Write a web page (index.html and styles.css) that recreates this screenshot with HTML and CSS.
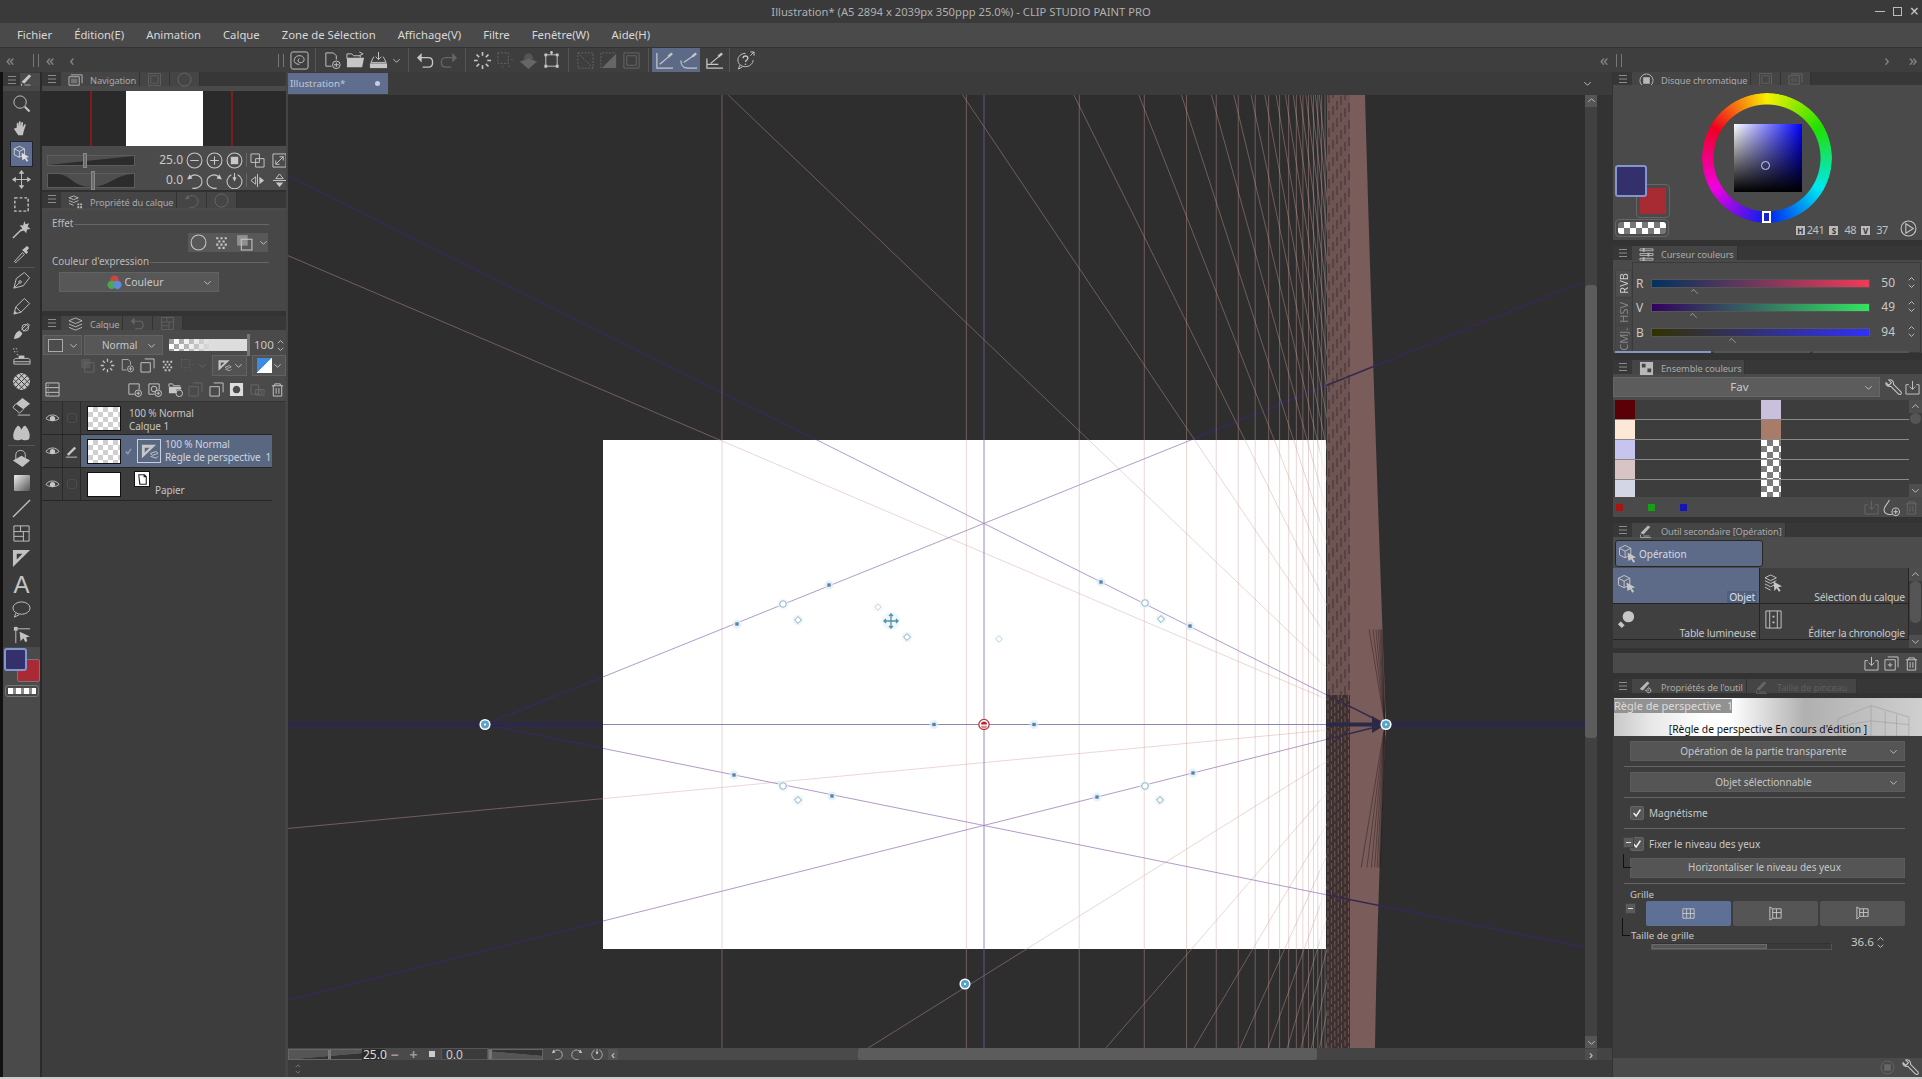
FILE: index.html
```html
<!DOCTYPE html>
<html lang="fr">
<head>
<meta charset="utf-8">
<title>CLIP STUDIO PAINT PRO</title>
<link rel="stylesheet" href="styles.css">
</head>
<body>
<svg class="defs" aria-hidden="true">
<defs>
<symbol id="burger" viewBox="0 0 12 12"><path d="M2 2.500h8M2 6h8M2 9.500h8"/></symbol>
<symbol id="chev" viewBox="0 0 10 10"><path d="M1.500 3.500 5 7l3.500-3.500"/></symbol>
<symbol id="spin" viewBox="0 0 10 16"><path d="M2 5.500 5 2.500l3 3M2 10.500l3 3 3-3"/></symbol>
<symbol id="zoom" viewBox="0 0 20 20"><circle cx="8.500" cy="8.500" r="6.500"/><path d="m13.500 13.500 5 5" stroke-width="2.200"/></symbol>
<symbol id="hand" viewBox="0 0 20 20"><path class="fl" d="M5 9V5c0-1.300 1.700-1.300 1.800 0l.4 3V3.500c0-1.400 1.900-1.400 2 0V8l.6-4c.2-1.300 1.900-1 1.800.2L11.300 9l1.500-3c.6-1 2-.4 1.600.7l-2 6-1 4.300H6.500L2.500 11c-.8-1.100.6-2.200 1.500-1.200Z"/></symbol>
<symbol id="objsel" viewBox="0 0 20 20"><path d="m7.500 1.500 6 3v7l-6 3-6-3v-7Zm-6 3 6 3 6-3m-6 3v7"/><path class="fl" d="m10 9 9 5-3.500 1 2.500 3.500-1.800 1.200-2.300-3.600L11 18Z"/></symbol>
<symbol id="move" viewBox="0 0 20 20"><path d="M10 3v14M3 10h14"/><path class="fl" d="m10 0 3 4H7Zm0 20-3-4h6ZM0 10l4-3v6Zm20 0-4 3V7Z"/></symbol>
<symbol id="marquee" viewBox="0 0 20 20"><path stroke-dasharray="3 2" d="M3 3h14v14H3Z" stroke-width="1.500"/></symbol>
<symbol id="wand" viewBox="0 0 20 20"><path d="m1 19 9-9" stroke-width="1.500"/><path class="fl" d="m13 1 1.300 3.500L18 3.500l-1.500 3.500 3 2.500-3.800.6-.7 3.900-2.500-3-3.500 1 1.700-3.400L8 5.500l3.700.3Z"/></symbol>
<symbol id="dropper" viewBox="0 0 20 20"><path d="M2.500 17.500 11 8l2 2-9 8.500Z"/><path class="fl" d="m11 5 2-1.500L15 1.500c1.200-1 3.500 1.300 2.500 2.500l-2 2L17 7.500 15 9.500 10 4.500Z"/></symbol>
<symbol id="pen" viewBox="0 0 20 20"><path d="M2 18 4.500 8 13 1.500 18.500 7 12 15.500Zm0 0 5.500-5.500"/><circle cx="8.500" cy="11.500" r="1.300"/></symbol>
<symbol id="pencil" viewBox="0 0 20 20"><path d="M2 18 4 10.500 13 1.500l5.500 5.500-9 9Zm2-7.500 5.500 5.500"/><path class="fl" d="M2 18 3 14.500 5.500 17Z"/></symbol>
<symbol id="brush" viewBox="0 0 20 20"><path class="fl" d="M2 18c1-5 2-7 6-9l3 3c-2 4-4 5-9 6Z"/><path d="m10 8 4-4 2.500-2.500 2 2-2.500 2.500-4 4"/><circle cx="14" cy="6" r="3.500"/></symbol>
<symbol id="spray" viewBox="0 0 20 20"><path class="fl" d="M7 9h6v3H7Z"/><path d="M4 12h13c1 0 2 1 2 2v4H2v-4c0-1 1-2 2-2Zm-2 3.500h17"/><path stroke-dasharray="1.500 1.500" d="M1 2h6M2 5h4M5 8h3"/></symbol>
<symbol id="decor" viewBox="0 0 20 20"><circle class="fl" cx="10" cy="10" r="9"/><path class="sd" d="M1 7 7 1M1 13 13 1M3 17 17 3M7 19 19 7M13 19l6-6M1 13l6 6M1 7l12 12M3 3l14 14M7 1l12 12M13 1l6 6"/></symbol>
<symbol id="eraser" viewBox="0 0 20 20"><path class="fl" d="m11 1 8 6-7 6-8-6Z"/><path d="m4 7-3 4 7 6 4-4M6 19h13"/></symbol>
<symbol id="blend" viewBox="0 0 20 20"><path class="fl" d="M2 17c-2-5 1-11 4-14 2 0 3 2 4 4 1-2 2-4 4-4 3 3 6 9 4 14-3 2-6 1-8 0-2 1-5 2-8 0Z"/></symbol>
<symbol id="fill" viewBox="0 0 20 20"><path class="fl" d="M10 7 19 12 11 19 1 12Z"/><path d="M4 11V6c0-6 10-6 10 0v3"/></symbol>
<symbol id="line" viewBox="0 0 20 20"><path d="M1 19 19 1" stroke-width="1.400"/></symbol>
<symbol id="frame" viewBox="0 0 20 20"><path d="M2 2h16v16H2ZM2 8h16M9 2v6M12 8v10M2 13h10"/></symbol>
<symbol id="ruler" viewBox="0 0 20 20"><path class="fl" d="M1 1h18L1 19Zm4 4v6l6-6Z" fill-rule="evenodd"/></symbol>
<symbol id="balloon" viewBox="0 0 20 20"><ellipse cx="10" cy="8.500" rx="9" ry="6.500"/><path d="m4 14-1.500 4 5-2.500"/></symbol>
<symbol id="correct" viewBox="0 0 20 20"><path class="fl" d="M2 2h4v4H2Z"/><path d="M6 4h13M4 6v13"/><path class="fl" d="m8 7 11 5-4 1 1 4-2 1-2-4-3 3Z"/></symbol>
<symbol id="spiral" viewBox="0 0 20 20"><rect x="1" y="1" width="18" height="18" rx="2"/><path d="M10 14c-4 0-6-2-5.500-5C5 6 8 4.500 11 5c3 .5 4.500 3 3.500 5.500-1 2-4 2.500-5.500 1-1-1-.6-3 1-3.500"/></symbol>
<symbol id="newdoc" viewBox="0 0 20 20"><path d="M9 16H3V2h8l3 3v4"/><circle cx="14" cy="14.500" r="4"/><path d="M14 12v5M11.500 14.500h5"/></symbol>
<symbol id="folder" viewBox="0 0 20 20"><path class="fl" d="M1 17V7h18l-2 10Z"/><path d="M1 8V3h5l2 2h7v2M14 1l4 2-4 2"/></symbol>
<symbol id="save" viewBox="0 0 20 20"><path d="M10 1v8M7 6l3 3 3-3M5 6 2 12h16l-3-6"/><path class="fl" d="M1 13h18v5H1Z"/></symbol>
<symbol id="undo" viewBox="0 0 20 20"><path d="M5 7h8c6 0 6 10 0 10H7" stroke-width="1.400"/><path class="fl" d="M6 2v10L1 7Z"/></symbol>
<symbol id="redo" viewBox="0 0 20 20"><path d="M15 7H7c-6 0-6 10 0 10h6" stroke-width="1.400"/><path class="fl" d="M14 2v10l5-5Z"/></symbol>
<symbol id="load" viewBox="0 0 20 20"><path stroke-width="1.700" d="M10 1v4M10 15v4M1 10h4M15 10h4M3.700 3.700l2.800 2.800M13.500 13.500l2.800 2.800M16.300 3.700l-2.800 2.800M6.500 13.500l-2.800 2.800"/></symbol>
<symbol id="selghost" viewBox="0 0 20 20"><path stroke-dasharray="2 1.500" d="M2 2h11v11H2Z"/><path stroke-dasharray="1.500 2" d="M16 9h3M7 16v3M13 16h3"/></symbol>
<symbol id="filldia" viewBox="0 0 20 20"><path class="fl" d="M10 8 19 11 10 19 1 11Z"/><path class="fl" d="M5 9c0-9 10-9 10 0Z" opacity=".6"/></symbol>
<symbol id="xform" viewBox="0 0 20 20"><path d="M4 4h12v12H4ZM10 4V0"/><path class="fl" d="M2.500 2.500h3v3h-3Zm12 0h3v3h-3Zm-12 12h3v3h-3Zm12 0h3v3h-3Zm-6-14h3v2h-3Z"/></symbol>
<symbol id="g1" viewBox="0 0 20 20"><path stroke-dasharray="2 1.500" d="M2 2h16v16H2ZM2 2l16 16"/></symbol>
<symbol id="g2" viewBox="0 0 20 20"><path stroke-dasharray="2 1.500" d="M2 18V2h16"/><path class="fl" d="M18 3v15H3Z"/></symbol>
<symbol id="g3" viewBox="0 0 20 20"><path d="M2 2h16v16H2ZM5 5h10v10H5Z"/></symbol>
<symbol id="r1" viewBox="0 0 20 20"><path d="M2 2v16h17M5 14 18 3" stroke-width="1.300"/><path d="m14 6 4-3.500" stroke-width="2.400"/></symbol>
<symbol id="r2" viewBox="0 0 20 20"><path d="M2 10c0 5 3 8 7 8h10M5 12 18 3" stroke-width="1.300"/><path d="m14 6 4-3.500" stroke-width="2.400"/></symbol>
<symbol id="r3" viewBox="0 0 20 20"><path d="M2 8v10h17M2 14h12M6 13 18 3" stroke-width="1.300"/><path d="m14 6 4-3.500" stroke-width="2.400"/></symbol>
<symbol id="help" viewBox="0 0 20 20"><path d="M10 2.500c-4.500 0-8 3-8 7s3.500 7 8 7c4 0 8-3 8-7M4 15l-1.500 4L7 16.500M15 1h4v4M19 1l-4 4"/><path d="M7.500 7.500c0-3 5-3 5 0 0 2-2.500 2-2.500 4" stroke-width="1.400"/><circle class="fl" cx="10" cy="14" r=".8"/></symbol>
<symbol id="cminus" viewBox="0 0 16 16"><circle cx="8" cy="8" r="7"/><path d="M4 8h8"/></symbol>
<symbol id="cplus" viewBox="0 0 16 16"><circle cx="8" cy="8" r="7"/><path d="M4 8h8M8 4v8"/></symbol>
<symbol id="cstop" viewBox="0 0 16 16"><circle cx="8" cy="8" r="7"/><path class="fl" d="M4.500 4.500h7v7h-7Z"/></symbol>
<symbol id="fitA" viewBox="0 0 16 16"><path d="M1 1h9v9H1ZM6 6h9v9H6Z"/></symbol>
<symbol id="fitB" viewBox="0 0 16 16"><path d="M1 1h14v14H1ZM4 12l8-8M8 4h4v4M4 8v4h4"/></symbol>
<symbol id="rotl" viewBox="0 0 16 16"><path d="M4 4.500C8 1 15 3 15 9s-7 7-9 6"/><path class="fl" d="m1 7 5-1-2.500-4Z"/></symbol>
<symbol id="rotr" viewBox="0 0 16 16"><path d="M12 4.500C8 1 1 3 1 9s7 7 9 6"/><path class="fl" d="m15 7-5-1 2.500-4Z"/></symbol>
<symbol id="rotz" viewBox="0 0 16 16"><path d="M11 2.500A7 7 0 1 1 5 2.500M8 1v7"/><path class="fl" d="M6 5h4L8 9Z"/></symbol>
<symbol id="fliph" viewBox="0 0 16 16"><path d="M8 1v14M6 4 1 8l5 4Z"/><path class="fl" d="m10 4 5 4-5 4Z"/></symbol>
<symbol id="flipv" viewBox="0 0 16 16"><path d="M1 8h14M4 6l4-5 4 5Z"/><path class="fl" d="m4 10 4 5 4-5Z"/></symbol>
<symbol id="stack" viewBox="0 0 16 16"><path d="M1 4h11v9H1Z"/><path d="M3 2h12v9"/><path class="fl" d="M3 6h7v5H3Z" opacity=".4"/></symbol>
<symbol id="layers" viewBox="0 0 16 16"><path d="m8 1 7 3-7 3-7-3ZM1 7.500l7 3 7-3M1 11l7 3 7-3"/></symbol>
<symbol id="layprop" viewBox="0 0 16 16"><path d="m6 1 5 2-5 2-5-2ZM1 6l5 2 5-2M1 9l5 2"/><path class="fl" d="M10 9h2v2h-2Zm3 0h2v2h-2Zm-3 3h2v2h-2Zm3 0h2v2h-2Z"/></symbol>
<symbol id="circ" viewBox="0 0 16 16"><circle cx="8" cy="8" r="7"/></symbol>
<symbol id="dots" viewBox="0 0 16 16"><path class="fl" d="M3 3h2v2H3Zm4 0h2v2H7Zm4 0h2v2h-2ZM5 6h2v2H5Zm4 0h2v2H9ZM3 9h2v2H3Zm4 0h2v2H7Zm4 0h2v2h-2ZM5 12h2v2H5Zm4 0h2v2H9Z"/></symbol>
<symbol id="wedges" viewBox="0 0 16 16"><path class="fl" d="M1 1h10v10H1Z" opacity=".5"/><path d="M5 5h10v10H5Z"/></symbol>
<symbol id="rgb" viewBox="0 0 16 16"><circle cx="8" cy="5" r="4.500" fill="#c8483c" stroke="none"/><circle cx="5" cy="10.500" r="4.500" fill="#4ca84c" stroke="none"/><circle cx="11" cy="10.500" r="4.500" fill="#5c8cd8" stroke="none"/></symbol>
<symbol id="eye" viewBox="0 0 16 16"><path d="M1 8c3-5 11-5 14 0M1 8c3 3 11 3 14 0"/><circle class="fl" cx="8" cy="8" r="2.800"/></symbol>
<symbol id="brushmark" viewBox="0 0 16 16"><path d="M2 14h12"/><path class="fl" d="m3 11 8-8 2 1.500-8 8Z"/></symbol>
<symbol id="persp" viewBox="0 0 20 20"><path class="fl" d="M2 3h15L2 17Zm3 3v5l5-5Z" fill-rule="evenodd"/><path d="m11 12 6-2 2 2-6 2ZM11 15l6 2 2-2"/></symbol>
<symbol id="page" viewBox="0 0 14 14"><path fill="#222" stroke="none" d="M3 2h6l2 2v8H4Z"/><path fill="#fff" stroke="none" d="M4 3h4v2h2v6H5Z"/></symbol>
<symbol id="addlay" viewBox="0 0 16 16"><path d="M8 13H2V2h11v6"/><circle cx="12" cy="12" r="3.500"/><path d="M12 10v4M10 12h4"/></symbol>
<symbol id="addvec" viewBox="0 0 16 16"><path d="M8 13H2V2h11v6"/><circle cx="7.500" cy="7.500" r="3"/><circle cx="12" cy="12" r="3.500"/><path d="M12 10v4M10 12h4"/></symbol>
<symbol id="addfold" viewBox="0 0 16 16"><path class="fl" d="M1 12V5h13v3H9v4Z"/><path d="M1 5V2h4l1 2h7"/><circle cx="12" cy="12" r="3.500"/></symbol>
<symbol id="dup" viewBox="0 0 16 16"><path d="M1 5h10v10H1ZM5 1h10v10"/></symbol>
<symbol id="maskc" viewBox="0 0 16 16"><path class="fl" fill-rule="evenodd" d="M1 1h14v14H1Zm7 3a4 4 0 1 0 .01 0Z"/></symbol>
<symbol id="addm" viewBox="0 0 16 16"><path d="M1 3h8v10H1Z"/><path d="M6 8h9v6H6Z"/><circle cx="10.500" cy="11" r="2"/></symbol>
<symbol id="trash" viewBox="0 0 16 16"><path d="M2 4h12M5 4V2h6v2M3.500 4v11h9V4M6.500 6.500v6M9.500 6.500v6"/></symbol>
<symbol id="listi" viewBox="0 0 16 16"><path d="M1 1h14v14H1ZM1 6h14M1 11h14M3 3.500h1M3 8.500h1M3 13h1"/></symbol>
<symbol id="wrench" viewBox="0 0 16 16"><path d="M1 3.500 3.500 6 6 3.500 3.500 1c2-.8 5 .5 4.500 4l7 7c.8 1 .2 2.500-1 2.500-.5 0-1-.2-1.500-.6l-7-7C3 7.500 .5 6 1 3.500Z"/></symbol>
<symbol id="import" viewBox="0 0 16 16"><path d="M4 5H1v10h14V5h-3M8 1v9M5 7l3 3 3-3"/></symbol>
<symbol id="adddrop" viewBox="0 0 16 16"><path d="M6 1C4 5 1 7 1 10c0 5 7 5 8 4"/><circle cx="12" cy="12" r="3.500"/><path d="M10 12h4M12 10v4"/></symbol>
<symbol id="plusbox" viewBox="0 0 16 16"><path d="M1 4h11v11H1ZM4 1h11v11M6.500 7v5M4 9.500h5"/></symbol>
<symbol id="bulb" viewBox="0 0 20 20"><circle class="fl" cx="12" cy="7" r="6"/><path class="fl" d="m4 12 4 4-3 3-4-4Z"/></symbol>
<symbol id="chrono" viewBox="0 0 20 20"><path d="M2 1h16v18H2ZM6 1v18M14 1v18"/><path class="fl" d="M9 6h2v2H9Zm0 6h2v2H9Z"/></symbol>
<symbol id="laysel" viewBox="0 0 20 20"><path d="m7 1 6 3-6 3-6-3ZM1 7l6 3 6-3M1 10.500l6 3 4-2M1 14l6 3"/><path class="fl" d="m10 8 9 5-4 1 2.500 3.500-1.800 1.200-2.300-3.700L11 18Z"/></symbol>
<symbol id="toolhdr" viewBox="0 0 20 20"><path class="fl" d="M2 12 12 2l3 2-9 10Z"/><path d="M2 14v4h14M6 16h8"/></symbol>
<symbol id="toolprop" viewBox="0 0 20 20"><path class="fl" d="M1 12 11 2l3 2-9 10Z"/><circle cx="13" cy="14" r="3"/><path stroke-dasharray="1.500 1.800" d="M13 9v10M8 14h10"/></symbol>
<symbol id="palette" viewBox="0 0 16 16"><path class="fl" d="M1 1h14v14H1Z"/><path fill="#444" stroke="none" d="M3 3h4v4H3Zm6 5h4v4H9Z"/></symbol>
<symbol id="sliders" viewBox="0 0 16 16"><path d="M1 2h14v2H1ZM1 7h14v2H1ZM1 12h14v2H1Z"/><path class="fl" d="M4 1h2v4H4Zm5 5h2v4H9Zm-5 5h2v4H4Z"/></symbol>
<symbol id="grid1" viewBox="0 0 16 16"><path d="M2 3h12v10H2ZM2 8h12M6 3v10M10 3v10"/></symbol>
<symbol id="grid2" viewBox="0 0 16 16"><path d="M2 1l3 2h9v10H5l-3 2ZM5 7h9M9 3v10M5 3v10"/></symbol>
<symbol id="grid3" viewBox="0 0 16 16"><path d="M2 1l3 2h9v8H5l-3 3ZM5 7h9M9 3v8M5 3v8"/></symbol>
<symbol id="check" viewBox="0 0 14 14"><path d="m3 7 3 3.500L11 3" stroke-width="1.800"/></symbol>
<symbol id="play" viewBox="0 0 16 16"><circle cx="8" cy="8" r="7"/><path d="M5.500 3.500 12.500 8l-7 4.500Z"/></symbol>
<symbol id="h-handle" viewBox="0 0 12 12"><circle cx="6" cy="6" r="5.500" fill="#dfeaf2" stroke="none" opacity=".7"/><rect x="4" y="4" width="4" height="4" fill="#4f86ab" stroke="none"/></symbol>
<symbol id="h-ring" viewBox="0 0 14 14"><circle cx="7" cy="7" r="6.500" fill="#e8f2f8" stroke="none" opacity=".6"/><circle cx="7" cy="7" r="3.800" fill="#fff" stroke="#7fa8bd" stroke-width="1"/></symbol>
<symbol id="h-diam" viewBox="0 0 14 14"><circle cx="7" cy="7" r="6.500" fill="#e8f2f8" stroke="none" opacity=".6"/><path d="m7 3 4 4-4 4-4-4Z" fill="#fff" stroke="#6c9db8" stroke-width="1"/></symbol>
<symbol id="h-vp" viewBox="0 0 14 14"><circle cx="7" cy="7" r="6.500" fill="#fff" stroke="none"/><circle cx="7" cy="7" r="4.700" fill="#58a2c8" stroke="none"/><circle cx="7" cy="7" r="1.300" fill="#fff" stroke="none"/></symbol>
<symbol id="h-red" viewBox="0 0 14 14"><circle cx="7" cy="7" r="6" fill="#fff" stroke="#c0353c" stroke-width="1.500"/><path d="M3.500 7a3.500 3.500 0 0 1 7 0Z" fill="#b02a32" stroke="none"/><path d="M3.500 8.500a3.500 3.500 0 0 0 7 0Z" fill="#d88a8e" stroke="none"/></symbol>
</defs>
</svg>

<header class="titlebar">
  <div class="title">Illustration* (A5 2894 x 2039px 350ppp 25.0%) - CLIP STUDIO PAINT PRO</div>
  <div class="winbtns"><span class="wb-min"></span><span class="wb-max"></span><span class="wb-close">×</span></div>
</header>

<nav class="menubar">
  <span>Fichier</span><span>Édition(E)</span><span>Animation</span><span>Calque</span><span>Zone de Sélection</span><span>Affichage(V)</span><span>Filtre</span><span>Fenêtre(W)</span><span>Aide(H)</span>
</nav>

<div class="toolbar">
  <div class="tb-left">
    <span class="dbl">«</span><span class="grip"></span><span class="dbl">«</span><span class="sgl">‹</span><span class="fillgap"></span><span class="grip end"></span>
  </div>
  <div class="tb-group tb-spiral"><svg class="ico i18"><use href="#spiral"/></svg></div>
  <div class="tb-group"><svg class="ico i18"><use href="#newdoc"/></svg><svg class="ico i18"><use href="#folder"/></svg><svg class="ico i18"><use href="#save"/></svg><svg class="ico i8"><use href="#chev"/></svg></div>
  <div class="tb-group"><svg class="ico i18"><use href="#undo"/></svg><svg class="ico i18 dim"><use href="#redo"/></svg></div>
  <div class="tb-group"><svg class="ico i18"><use href="#load"/></svg><svg class="ico i18 dim"><use href="#selghost"/></svg><svg class="ico i18 dim"><use href="#filldia"/></svg><svg class="ico i18"><use href="#xform"/></svg></div>
  <div class="tb-group"><svg class="ico i18 dim"><use href="#g1"/></svg><svg class="ico i18 dim"><use href="#g2"/></svg><svg class="ico i18 dim"><use href="#g3"/></svg></div>
  <div class="tb-group tb-rulers"><div class="tb-active"><svg class="ico i18"><use href="#r1"/></svg><svg class="ico i18"><use href="#r2"/></svg></div><svg class="ico i18"><use href="#r3"/></svg></div>
  <div class="tb-group tb-last"><svg class="ico i18"><use href="#help"/></svg></div>
  <div class="tb-right"><span class="dbl">«</span><span class="grip"></span><span class="fillgap"></span><span class="sgl">›</span><span class="dbl">»</span></div>
</div>

<div class="workspace">
  <aside class="tools">
    <div class="tools-head"><svg class="ico i12 burger"><use href="#burger"/></svg><span class="tools-tab"><svg class="ico i14"><use href="#toolhdr"/></svg></span></div>
    <div class="tool-list">
      <div class="tool"><svg class="ico"><use href="#zoom"/></svg></div>
      <div class="tool"><svg class="ico"><use href="#hand"/></svg></div>
      <div class="tool on"><svg class="ico"><use href="#objsel"/></svg></div>
      <div class="tool"><svg class="ico"><use href="#move"/></svg></div>
      <div class="tool"><svg class="ico"><use href="#marquee"/></svg></div>
      <div class="tool"><svg class="ico"><use href="#wand"/></svg></div>
      <div class="tool"><svg class="ico"><use href="#dropper"/></svg></div>
      <div class="tool-sep"></div>
      <div class="tool"><svg class="ico"><use href="#pen"/></svg></div>
      <div class="tool"><svg class="ico"><use href="#pencil"/></svg></div>
      <div class="tool"><svg class="ico"><use href="#brush"/></svg></div>
      <div class="tool"><svg class="ico"><use href="#spray"/></svg></div>
      <div class="tool"><svg class="ico"><use href="#decor"/></svg></div>
      <div class="tool"><svg class="ico"><use href="#eraser"/></svg></div>
      <div class="tool"><svg class="ico"><use href="#blend"/></svg></div>
      <div class="tool-sep"></div>
      <div class="tool"><svg class="ico"><use href="#fill"/></svg></div>
      <div class="tool"><span class="grad-ico"></span></div>
      <div class="tool"><svg class="ico"><use href="#line"/></svg></div>
      <div class="tool"><svg class="ico"><use href="#frame"/></svg></div>
      <div class="tool"><svg class="ico"><use href="#ruler"/></svg></div>
      <div class="tool tool-a">A</div>
      <div class="tool"><svg class="ico"><use href="#balloon"/></svg></div>
      <div class="tool"><svg class="ico"><use href="#correct"/></svg></div>
    </div>
    <div class="tool-colors">
      <div class="mini-swatches"><span class="mini-bg"></span><span class="mini-fg"></span></div>
      <div class="mini-trans"><span></span></div>
    </div>
  </aside>

  <section class="leftcol">
    <div class="phead"><svg class="ico i12 burger"><use href="#burger"/></svg><span class="ptab"><svg class="ico i14"><use href="#stack"/></svg>Navigation</span><span class="ptab off"><svg class="ico i14"><use href="#g3"/></svg></span><span class="ptab off"><svg class="ico i14"><use href="#circ"/></svg></span></div>
    <div class="strip"></div>
    <div class="navview"><span class="redline"></span><span class="navpaper"></span><span class="redline"></span></div>
    <div class="navctl">
      <div class="navrow">
        <div class="wedge"><svg viewBox="0 0 88 10" preserveAspectRatio="none"><path d="M0 10 88 0v10Z" fill="#2c2c2c"/></svg><span class="wthumb t1"></span></div>
        <span class="val">25.0</span><svg class="ico i16"><use href="#cminus"/></svg><svg class="ico i16"><use href="#cplus"/></svg><svg class="ico i16"><use href="#cstop"/></svg><span class="vsep"></span><svg class="ico i14"><use href="#fitA"/></svg><svg class="ico i14"><use href="#fitB"/></svg>
      </div>
      <div class="navrow">
        <div class="wedge w2"><svg viewBox="0 0 88 14" preserveAspectRatio="none"><path d="M0 0h10c12 0 16 14 34 14S70 0 88 0v14H0Z" fill="#2c2c2c"/></svg><span class="wthumb t2"></span></div>
        <span class="val">0.0</span><svg class="ico i16"><use href="#rotl"/></svg><svg class="ico i16"><use href="#rotr"/></svg><svg class="ico i16"><use href="#rotz"/></svg><span class="vsep"></span><svg class="ico i14"><use href="#fliph"/></svg><svg class="ico i14"><use href="#flipv"/></svg>
      </div>
    </div>
    <div class="gap2"></div>
    <div class="phead p16"><svg class="ico i12 burger"><use href="#burger"/></svg><span class="ptab"><svg class="ico i14"><use href="#layprop"/></svg>Propriété du calque</span><span class="ptab off"><svg class="ico i14"><use href="#rotl"/></svg></span><span class="ptab off"><svg class="ico i14"><use href="#circ"/></svg></span></div>
    <div class="propbody">
      <div class="legend"><span>Effet</span><i></i></div>
      <div class="effects"><svg class="ico i16"><use href="#circ"/></svg><svg class="ico i16"><use href="#dots"/></svg><svg class="ico i16"><use href="#wedges"/></svg><svg class="ico i8"><use href="#chev"/></svg></div>
      <div class="legend lg2"><span>Couleur d'expression</span><i></i></div>
      <div class="combo expr"><svg class="ico i14"><use href="#rgb"/></svg><span>Couleur</span><svg class="ico i8 cv"><use href="#chev"/></svg></div>
    </div>
    <div class="gap5"></div>
    <div class="phead"><svg class="ico i12 burger"><use href="#burger"/></svg><span class="ptab"><svg class="ico i14"><use href="#layers"/></svg>Calque</span><span class="ptab off"><svg class="ico i14"><use href="#undo"/></svg></span><span class="ptab off"><svg class="ico i14"><use href="#frame"/></svg></span></div>
    <div class="layctl">
      <div class="lrow r1">
        <div class="combo sw"><span class="wsq"></span><svg class="ico i8"><use href="#chev"/></svg></div>
        <div class="combo blend"><span>Normal</span><svg class="ico i8"><use href="#chev"/></svg></div>
        <div class="opac"><span class="opthumb"></span></div>
        <span class="opval">100</span><svg class="ico spin"><use href="#spin"/></svg>
      </div>
      <div class="lrow r2">
        <svg class="ico i14 dim"><use href="#wedges"/></svg><svg class="ico i14"><use href="#load"/></svg><svg class="ico i14"><use href="#newdoc"/></svg><svg class="ico i14"><use href="#dup"/></svg><svg class="ico i14"><use href="#dots"/></svg><svg class="ico i14 dim"><use href="#selghost"/></svg><svg class="ico i8 dim"><use href="#chev"/></svg>
        <div class="combo mode"><svg class="ico i14"><use href="#persp"/></svg><svg class="ico i8"><use href="#chev"/></svg></div>
        <div class="combo mode"><span class="bluesq"></span><svg class="ico i8"><use href="#chev"/></svg></div>
      </div>
      <div class="lrow r3">
        <svg class="ico i14 firsti"><use href="#listi"/></svg>
        <svg class="ico i14"><use href="#addlay"/></svg><svg class="ico i14"><use href="#addvec"/></svg><svg class="ico i14"><use href="#addfold"/></svg><svg class="ico i14 dim"><use href="#dup"/></svg><svg class="ico i14"><use href="#dup"/></svg><svg class="ico i14 light"><use href="#maskc"/></svg><svg class="ico i14 dim"><use href="#addm"/></svg><svg class="ico i14"><use href="#trash"/></svg>
      </div>
    </div>
    <div class="laylist">
      <div class="lay">
        <div class="lay-eye"><svg class="ico i14"><use href="#eye"/></svg></div><div class="lay-pen"><span class="dotbox"></span></div>
        <div class="lay-main"><span class="thumb chk"></span><div class="lay-txt"><span>100 % Normal</span><span>Calque 1</span></div></div>
      </div>
      <div class="lay sel">
        <div class="lay-eye"><svg class="ico i14"><use href="#eye"/></svg></div><div class="lay-pen"><svg class="ico i14"><use href="#brushmark"/></svg></div>
        <div class="lay-main"><span class="thumb chk"></span><svg class="ico i8 chkm"><use href="#check"/></svg><span class="rulerbox"><svg class="ico i18"><use href="#persp"/></svg></span><div class="lay-txt"><span>100 % Normal</span><span>Règle de perspective  1</span></div></div>
      </div>
      <div class="lay">
        <div class="lay-eye"><svg class="ico i14"><use href="#eye"/></svg></div><div class="lay-pen"><span class="dotbox"></span></div>
        <div class="lay-main"><span class="thumb whitep"></span><span class="pagebox"><svg class="ico i14"><use href="#page"/></svg></span><div class="lay-txt paper"><span>Papier</span></div></div>
      </div>
    </div>
  </section>

  <main class="center">
    <div class="tabbar"><div class="doctab"><span>Illustration*</span><i></i></div><span class="tabmenu"><svg class="ico i8"><use href="#chev"/></svg></span></div>
    <div class="canvasrow">
      <svg class="canvas" id="cv" viewBox="288 95 1297 953" role="img" aria-label="Canevas avec règle de perspective">
        <defs>
          <clipPath id="paperclip"><rect x="603" y="440" width="723" height="509"/></clipPath>
          <clipPath id="rightclip"><rect x="1326" y="95" width="259" height="953"/></clipPath>
        </defs>
        <g id="thick"></g>
        <rect x="603" y="440" width="723" height="509" fill="#fff"/>
        <g id="grid"></g>
        <g id="band"></g>
        <rect x="1320" y="440" width="6" height="509" fill="#fff" opacity=".55"/>
        <g id="thin" clip-path="url(#paperclip)"></g>
        <g id="over" clip-path="url(#rightclip)"></g>
        <g id="handles"></g>
      </svg>
      <div class="vscroll"><span class="cap"><svg class="ico i8"><use href="#chev"/></svg></span><span class="vt-a"></span><span class="vthumb"></span><span class="vt-b"></span><span class="cap down"><svg class="ico i8"><use href="#chev"/></svg></span></div>
    </div>
    <div class="hbar">
      <div class="hctl">
        <div class="bwedge"><span class="bw-a"></span><span class="bw-t"></span><span class="bw-b"></span></div><span class="bval">25.0</span>
        <span class="bbtn">−</span><span class="bbtn">+</span><span class="bstop"></span>
        <span class="bval0">0.0</span><div class="bwedge b2"><span class="bw-t"></span><span class="bw-b"></span></div>
        <svg class="ico i12"><use href="#rotl"/></svg><svg class="ico i12"><use href="#rotr"/></svg><svg class="ico i12"><use href="#rotz"/></svg><span class="bchev">‹</span>
      </div>
      <div class="hthumb"></div><span class="hfill"></span><span class="bchev r">›</span>
    </div>
    <div class="statusrow"><svg class="ico i8 up"><use href="#spin"/></svg></div>
  </main>

  <aside class="rightcol">
    <div class="phead r"><svg class="ico i12 burger"><use href="#burger"/></svg><span class="ptab"><svg class="ico i14"><use href="#cstop"/></svg>Disque chromatique</span><span class="ptab off"><svg class="ico i14"><use href="#g3"/></svg></span><span class="ptab off"><svg class="ico i14"><use href="#stack"/></svg></span></div>
    <div class="disc">
      <div class="colors">
        <div class="big-sw"><span class="bgsw"></span><span class="fgsw"></span></div>
        <div class="trans-sw"><span></span></div>
      </div>
      <div class="wheelwrap">
        <div class="wheel"></div>
        <div class="svsq"><span class="svmark"></span></div>
        <span class="huemark"></span>
      </div>
      <div class="hsv"><span class="hk">H</span><span class="n1">241</span><span class="hk">S</span><span class="n2">48</span><span class="hk">V</span><span class="n2">37</span><svg class="ico i16"><use href="#play"/></svg></div>
    </div>
    <div class="phead r mt6"><svg class="ico i12 burger"><use href="#burger"/></svg><span class="ptab"><svg class="ico i14"><use href="#sliders"/></svg>Curseur couleurs</span></div>
    <div class="sliders">
      <div class="sidetabs"><span class="on">RVB</span><span>HSV</span><span>CMJ.</span></div>
      <div class="sl-list">
        <div class="sl"><b>R</b><div class="bar br"><i class="ct c1"></i></div><span>50</span><svg class="ico spin"><use href="#spin"/></svg></div>
        <div class="sl"><b>V</b><div class="bar bv"><i class="ct c2"></i></div><span>49</span><svg class="ico spin"><use href="#spin"/></svg></div>
        <div class="sl"><b>B</b><div class="bar bb"><i class="ct c3"></i></div><span>94</span><svg class="ico spin"><use href="#spin"/></svg></div>
      </div>
    </div>
    <div class="hint-tabs"><span class="on"></span><span></span><span></span></div>
    <div class="phead r mt6"><svg class="ico i12 burger"><use href="#burger"/></svg><span class="ptab"><svg class="ico i14"><use href="#palette"/></svg>Ensemble couleurs</span></div>
    <div class="favrow"><div class="combo fav"><span>Fav</span><svg class="ico i8 cv"><use href="#chev"/></svg></div><svg class="ico i16"><use href="#wrench"/></svg><svg class="ico i14"><use href="#import"/></svg></div>
    <div class="swatches">
      <div class="swgrid">
        <div class="cell"><span class="cs c11"></span><span class="cs c21"></span></div>
        <div class="cell"><span class="cs c12"></span><span class="cs c22"></span></div>
        <div class="cell"><span class="cs c13"></span><span class="cs chk2"></span></div>
        <div class="cell"><span class="cs c14"></span><span class="cs chk2"></span></div>
        <div class="cell last"><span class="cs c15"></span><span class="cs chk2"></span></div>
      </div>
      <div class="sbar"><span class="sb-cap"><svg class="ico i8"><use href="#chev"/></svg></span><span class="sb-t"></span><span class="sb-cap down"><svg class="ico i8"><use href="#chev"/></svg></span></div>
    </div>
    <div class="swfoot"><span class="dot red"></span><span class="dot green"></span><span class="dot blue"></span><span class="fg"></span><svg class="ico i14 dim"><use href="#import"/></svg><svg class="ico i16"><use href="#adddrop"/></svg><svg class="ico i14 dim"><use href="#trash"/></svg></div>
    <div class="phead r mt6"><svg class="ico i12 burger"><use href="#burger"/></svg><span class="ptab"><svg class="ico i14"><use href="#toolhdr"/></svg>Outil secondaire [Opération]</span></div>
    <div class="grouprow"><div class="grp-on"><svg class="ico i18"><use href="#objsel"/></svg>Opération</div></div>
    <div class="subtools">
      <div class="stgrid">
        <div class="st on"><svg class="ico i18"><use href="#objsel"/></svg><span>Objet</span></div>
        <div class="st"><svg class="ico i18"><use href="#laysel"/></svg><span>Sélection du calque</span></div>
        <div class="st"><svg class="ico i18"><use href="#bulb"/></svg><span>Table lumineuse</span></div>
        <div class="st"><svg class="ico i18"><use href="#chrono"/></svg><span>Éditer la chronologie</span></div>
      </div>
      <div class="sbar tall"><span class="sb-cap"><svg class="ico i8"><use href="#chev"/></svg></span><span class="sb-t"></span><span class="sb-cap down"><svg class="ico i8"><use href="#chev"/></svg></span></div>
    </div>
    <div class="stfoot"><span class="fg"></span><svg class="ico i14"><use href="#import"/></svg><svg class="ico i14"><use href="#plusbox"/></svg><svg class="ico i14"><use href="#trash"/></svg></div>
    <div class="phead r mt6"><svg class="ico i12 burger"><use href="#burger"/></svg><span class="ptab"><svg class="ico i14"><use href="#toolprop"/></svg>Propriétés de l'outil</span><span class="ptab off long"><svg class="ico i14"><use href="#toolhdr"/></svg>Taille de pinceau</span></div>
    <div class="banner">
      <span class="bn-name">Règle de perspective  1</span>
      <svg class="bn-art" viewBox="0 0 90 38"><path d="M10 20 45 6l40 12v20H10ZM45 6v32M10 28l35-6 40 4M60 12v26M72 15v23"/></svg>
      <span class="bn-cap">[Règle de perspective En cours d'édition ]</span>
    </div>
    <div class="props">
      <div class="combo pc"><span>Opération de la partie transparente</span><svg class="ico i8 cv"><use href="#chev"/></svg></div>
      <div class="psep"></div>
      <div class="combo pc"><span>Objet sélectionnable</span><svg class="ico i8 cv"><use href="#chev"/></svg></div>
      <div class="psep"></div>
      <label class="ck"><span class="box"><svg class="ico i12 w"><use href="#check"/></svg></span>Magnétisme</label>
      <div class="psep s2"></div>
      <div class="ck tree"><span class="minus"></span><span class="box"><svg class="ico i12 w"><use href="#check"/></svg></span>Fixer le niveau des yeux</div>
      <div class="pbtn"><span class="elbow"></span>Horizontaliser le niveau des yeux</div>
      <div class="psep s3"></div>
      <div class="gridlabel">Grille</div>
      <div class="seg"><span class="minus m2"></span><span class="sg on"><svg class="ico i14"><use href="#grid1"/></svg></span><span class="sg"><svg class="ico i14"><use href="#grid2"/></svg></span><span class="sg"><svg class="ico i14"><use href="#grid3"/></svg></span></div>
      <div class="gsize"><span class="elbow e2"></span><span class="gtext">Taille de grille</span>
        <div class="gslider"><span></span></div><span class="gval">36.6</span><svg class="ico spin"><use href="#spin"/></svg></div>
    </div>
    <div class="pfoot"><span class="fg"></span><svg class="ico i14 dim"><use href="#cstop"/></svg><svg class="ico i16"><use href="#wrench"/></svg></div>
  </aside>
</div>
<div class="bottomline"></div>
<script src="canvas.js"></script>
</body>
</html>
```

FILE: styles.css
```css
*{box-sizing:border-box}
html,body{margin:0;padding:0}
body{width:1922px;height:1079px;overflow:hidden;display:flex;flex-direction:column;background:#333;color:#c4c4c4;font:11px/1.2 "Noto Sans","Open Sans",sans-serif}
.defs{position:absolute;width:0;height:0}
.ico{width:20px;height:20px;fill:none;stroke:currentColor;stroke-width:1;flex:none;color:#c6c6c6}
symbol .fl{fill:currentColor;stroke:none}
symbol .sd{stroke:#3c3c3c}
.i8{width:9px;height:9px}.i12{width:12px;height:12px}.i14{width:15px;height:15px}.i16{width:17px;height:17px}.i18{width:19px;height:19px}
.ico.dim{color:#666}.ico.light{color:#ddd}.ico.w{color:#eee}
.ico.spin{width:9px;height:15px}

.titlebar{height:23px;flex:none;background:#3a3a3a;position:relative;display:flex;justify-content:center;align-items:center;color:#b0b0b0;font-size:11.200px}
.winbtns{position:absolute;right:3px;top:3px;display:flex;gap:8px;align-items:center;height:16px;color:#ccc}
.wb-min{width:10px;height:1px;background:#bbb}
.wb-max{width:9px;height:9px;border:1px solid #bbb}
.wb-close{font-size:16px;line-height:16px}

.menubar{height:24px;flex:none;background:#4a4a4a;display:flex;align-items:center;padding-left:17px;gap:22px;font-size:11.300px;color:#d8d8d8}
.toolbar{height:25px;flex:none;background:#3e3e3e;border-top:1px solid #333;display:flex;align-items:center}
.tb-left{width:284px;display:flex;align-items:center;height:100%;padding-left:1px;color:#999;flex:none}
.dbl{font-size:17px;line-height:18px;width:18px;text-align:center;color:#8a8a8a;flex:none}
.sgl{font-size:17px;line-height:18px;width:26px;text-align:center;color:#8a8a8a;flex:none}
.grip{width:6px;height:13px;border-left:1px solid #777;border-right:1px solid #777;margin:0 2px 0 14px;flex:none}
.grip.end{margin:0}
.fillgap{flex:1}
.tb-group{display:flex;align-items:center;gap:4px;height:100%;padding:0 7px;border-right:1px solid #555;flex:none}
.tb-spiral{padding:0 6px}
.tb-rulers{padding:0 5px 0 3px;gap:5px}
.tb-last{border:none;padding-left:6px}
.tb-active{display:flex;gap:5px;background:#5c6a88;height:100%;padding:0 3px;align-items:center;width:48px}
.tb-right{margin-left:auto;width:327px;flex:none;display:flex;align-items:center;height:100%}
.tb-right .grip{margin:0 0 0 3px}
.tb-right .sgl{margin-right:4px}

.workspace{flex:1;display:flex;min-height:0;background:#333}
.tools{width:42px;flex:none;display:flex;flex-direction:column;border-left:3px solid #111;background:#3b3b3b;border-right:2px solid #2a2a2a}
.tools-head{height:19px;display:flex;align-items:flex-start;padding-top:1px;flex:none;background:#383838;border-bottom:5px solid #484848}
.tools-head .burger{margin:1px 0 0 3px;color:#888}
.tools-tab{width:20px;height:13px;background:#4a4a4a;overflow:hidden;margin-left:2px;display:block}
.tool-list{display:flex;flex-direction:column;flex:none}
.tool{height:25.200px;display:flex;align-items:center;justify-content:center;flex:none}
.tool .ico{width:19px;height:19px;color:#c2c2c2}
.tool.on{width:23px;margin-left:7px;background:#5f6e90;border:1px solid #1e2430}
.tool.on .ico{width:17px;height:17px;color:#ddd}
.tool-a{font-size:24px;line-height:25px;color:#c6c6c6;font-family:"Liberation Sans",sans-serif}
.tool-sep{height:1px;background:#555;margin:0 5px;flex:none}
.grad-ico{width:16px;height:16px;background:linear-gradient(135deg,#eee,#555);border-radius:1px}
.tool-colors{flex:1;background:#4a4a4a;padding-top:0}
.mini-swatches{position:relative;height:35px;width:37px}
.mini-bg{position:absolute;left:14px;top:12px;width:23px;height:23px;background:#a92a35;border:1px solid #777;border-radius:2px}
.mini-fg{position:absolute;left:1px;top:1px;width:23px;height:23px;background:#33306c;border:2px solid #8296cc;border-radius:3px}
.mini-trans{width:34px;height:12px;margin:3px 0 0 2px;border:1px solid #777;border-radius:3px;padding:2px}
.mini-trans span{display:block;height:100%;background:repeating-linear-gradient(90deg,#fff 0 5px,#888 5px 8px)}

.leftcol{width:244px;flex:none;display:flex;flex-direction:column;background:#3d3d3d}
.phead{height:14px;flex:none;display:flex;align-items:flex-end;background:#373737;padding-left:19px;position:relative;font-size:9.250px}
.phead.p16{height:16px}
.phead .burger{position:absolute;left:4px;top:1px;color:#8c8c8c}
.ptab{height:100%;background:#454545;display:flex;align-items:center;gap:7px;padding:3px 3px 0 7px;color:#aaa;letter-spacing:-.1px;white-space:nowrap;border-right:1px solid #333}
.p16 .ptab{padding-top:5px}
.ptab .ico{color:#b8b8b8}
.ptab.off{padding:0 6px;width:30px;justify-content:center}
.ptab.off .ico{color:#666}
.ptab.long{width:auto;color:#5e5e5e;padding:3px 9px 0 8px}
.ptab.long .ico{color:#666}
.strip{height:5px;flex:none;background:#4a4a4a}
.navview{height:55px;flex:none;background:#2a2a2a;display:flex;padding-left:48px}
.redline{width:2px;background:#7c1e1e;flex:none;height:100%}
.navpaper{width:77px;background:#fff;margin:0 28px 0 34px;flex:none}
.navctl{height:44px;flex:none;background:#4b4b4b;padding:5px 4px 0 5px;display:flex;flex-direction:column;gap:2px}
.navrow{display:flex;align-items:center;height:18px;gap:3px;color:#c8c8c8}
.navrow .ico{color:#c8c8c8}
.navrow .i14:last-child{margin-left:4px}
.wedge{width:88px;height:11px;position:relative;background:#4e4e4e;border:1px solid #5c5c5c;flex:none}
.wedge.w2{height:15px}
.wedge svg{width:100%;height:100%;display:block}
.wthumb{position:absolute;top:-3px;bottom:-3px;width:4px;background:#6c6c6c;border:1px solid #888}
.t1{left:35px}.t2{left:43px}
.val{width:45px;text-align:right;font-size:12px;flex:none}
.vsep{width:1px;height:14px;background:#666;margin:0;flex:none}
.gap2{height:2px;flex:none;background:#303030}
.gap5{height:5px;flex:none;background:#333}
.propbody{height:103px;flex:none;background:#474747;padding:6px 17px 0 10px;border-top:3px solid #4a4a4a}
.legend{display:flex;align-items:center;gap:1px;height:14px;font-size:9.900px;color:#bcbcbc}
.legend i{flex:1;height:1px;background:#666}
.lg2{margin-top:3px}
.effects{display:flex;align-items:center;gap:6px;width:80px;height:19px;background:#585858;margin:2px 0 0 136px;padding:0 2px}
.combo{display:flex;align-items:center;background:#575757;border:1px solid #626262;color:#c8c8c8;position:relative}
.expr{width:160px;height:20px;margin:3px 0 0 7px;justify-content:center;gap:3px;font-size:10.500px;padding-right:8px}
.cv{position:absolute;right:6px;top:50%;margin-top:-4px}
.layctl{height:71px;flex:none;background:#4a4a4a;padding:5px 0 0 1px}
.lrow{display:flex;align-items:center}
.r1{height:20px}
.sw{width:39px;height:20px;padding-left:4px;gap:6px;background:#545454}
.wsq{width:15px;height:13px;border:1px solid #aaa;background:#4c4c4c;flex:none}
.blend{width:79px;height:20px;margin-left:2px;justify-content:space-between;padding:0 6px 0 17px;font-size:10px}
.opac{width:78px;height:12px;margin-left:6px;position:relative;background:linear-gradient(90deg,transparent,#ddd 55%),repeating-conic-gradient(#fff 0 25%,#999 0 50%) 0 0/10px 10px}
.opthumb{position:absolute;right:-3px;top:-5px;bottom:-5px;width:3px;background:#777}
.opval{margin-left:7px;font-size:11.500px;width:22px}
.r2{height:21px;padding-left:37px;gap:5px}
.r2 .i8{margin-left:-2px}
.mode{width:35px;height:21px;background:#525252;padding:0 3px 0 4px;justify-content:space-between}
.bluesq{width:15px;height:15px;background:linear-gradient(135deg,#3d8be0 50%,#fff 50%);flex:none}
.r3{height:20px;margin-top:3px;gap:5.500px}
.firsti{margin:0 61px 0 2px}
.laylist{flex:1;background:#3d3d3d;border-top:1px solid #333;padding-right:13px;border-right:1px solid #444}
.lay{height:33px;display:flex;border-bottom:1px solid #262626}
.lay-eye{width:21px;flex:none;display:flex;align-items:center;justify-content:center;border-right:1px solid #2a2a2a}
.lay-pen{width:18px;flex:none;display:flex;align-items:center;justify-content:center;border-right:1px solid #2a2a2a}
.dotbox{width:10px;height:10px;border:1px solid #4c4c4c;border-radius:3px}
.lay-main{flex:1;min-width:0;display:flex;align-items:center;padding-left:6px}
.sel .lay-main{background:#5a6780;color:#cfd5e0}
.thumb{width:34px;height:25px;border:1px solid #111;flex:none}
.chk{background:repeating-conic-gradient(#cfcfcf 0 25%,#fff 0 50%) 0 0/10px 10px}
.whitep{background:#fff}
.lay-txt{display:flex;flex-direction:column;margin:3px 0 0 8px;font-size:10px;line-height:13px;white-space:pre;letter-spacing:-.1px}
.chkm{margin-left:3px;color:#99a4ba}
.rulerbox{width:24px;height:24px;border:1px solid #c8cede;display:flex;align-items:center;justify-content:center;margin:0 4px 0 4px;flex:none}
.sel .lay-txt{margin:0}
.pagebox{width:16px;height:16px;background:#fff;border:1px solid #111;margin:-10px 0 0 13px;display:flex;align-items:center;justify-content:center;flex:none}
.lay-txt.paper{margin:13px 0 0 5px}

.center{flex:1;min-width:0;display:flex;flex-direction:column;border-left:2px solid #454545;background:#333}
.tabbar{height:23px;flex:none;background:#3b3b3b;display:flex;padding:1px 20px 1px 0;justify-content:space-between}
.doctab{width:100px;background:#5f6e8e;display:flex;align-items:center;justify-content:space-between;padding:0 8px 0 2px;color:#c0c8d8;font-size:9.800px}
.doctab i{width:5px;height:5px;border-radius:50%;background:#ccd}
.tabmenu{display:flex;align-items:center;color:#aaa}
.canvasrow{height:953px;flex:none;display:flex}
.canvas{width:1297px;height:953px;display:block;background:#2e2e2e;flex:none}
.vscroll{width:12px;flex:none;display:flex;flex-direction:column;background:#3a3a3a;margin-right:15px}
.cap{height:12px;background:#555;display:flex;align-items:center;justify-content:center;flex:none;transform:scaleY(-1)}
.cap.down{transform:none}
.vt-a{height:178px;background:#414141;flex:none}
.vthumb{height:453px;background:#5c5c5c;flex:none;border-radius:3px}
.vt-b{flex:1;background:#414141}
.hbar{height:12px;flex:none;display:flex;align-items:center;background:#444}
.hctl{width:570px;height:12px;display:flex;align-items:center;color:#ccc;background:#4a4a4a;flex:none}
.hctl .ico{margin-left:8px}
.bwedge{width:96px;height:11px;display:flex;border:1px solid #666;background:linear-gradient(175deg,#555 55%,#333 58%);flex:none}
.bw-a{width:39px;flex:none}
.bw-t{width:3px;background:#777;flex:none}
.bw-b{flex:1}
.b2{width:55px;background:linear-gradient(185deg,#333 40%,#555 44%)}
.bval{margin-left:-22px;font-size:12px;color:#ddd;position:relative;background:#2a2a2a;height:11px;line-height:11px;padding:0 1px;width:23px}
.bbtn{font-size:14px;line-height:11px;width:19px;text-align:center;font-weight:700;color:#999}
.bbtn:first-of-type{margin-left:8px}
.bstop{width:6px;height:6px;background:#ccc;margin:0 6px;flex:none}
.bval0{width:47px;background:#3b3b3b;border:1px solid #555;height:12px;line-height:11px;font-size:12px;padding-left:4px;flex:none}
.bchev{font-size:13px;line-height:11px;background:#555;width:10px;text-align:center;margin-left:5px;color:#ccc;flex:none}
.bchev.r{margin:0 15px 0 0;width:12px;background:#4e4e4e}
.hthumb{width:459px;height:12px;background:#5c5c5c;border-radius:2px;flex:none}
.hfill{flex:1}
.statusrow{flex:1;background:#3b3b3b;padding-left:5px;display:flex;align-items:center}
.up{width:10px;height:12px;color:#888}

.rightcol{width:310px;flex:none;display:flex;flex-direction:column;background:#333;overflow:hidden}
.phead.r{margin-left:1px;background:#373737}
.phead.r.mt6{margin-top:6px}
.disc{height:155px;flex:none;margin-left:1px;background:#4a4a4a;position:relative;margin-top:-1px;border-top:1px solid #4a4a4a}
.colors{position:absolute;left:2px;top:79px;width:54px}
.big-sw{position:relative;height:53px}
.bgsw{position:absolute;left:22px;top:20px;width:32px;height:32px;background:#a82a33;border:3px solid #4a4a4a;outline:1px solid #666;border-radius:3px}
.fgsw{position:absolute;left:0;top:0;width:32px;height:32px;background:#33306c;border:2px solid #8296cc;border-radius:3px}
.trans-sw{height:18px;margin-top:1px;border:1px solid #666;border-radius:4px;padding:2px}
.trans-sw span{display:block;height:100%;background:repeating-conic-gradient(#fff 0 25%,#777 0 50%) 0 0/12px 12px;border-radius:3px}
.wheelwrap{position:absolute;left:89px;top:7px;width:130px;height:130px}
.wheel{width:130px;height:130px;border-radius:50%;background:conic-gradient(#f8f000,#20e000 60deg,#00e8f0 120deg,#0020f0 180deg,#f000e0 240deg,#f00020 300deg,#f8f000);-webkit-mask:radial-gradient(circle,transparent 53px,#000 54px);mask:radial-gradient(circle,transparent 53px,#000 54px)}
.svsq{position:absolute;left:32px;top:31px;width:68px;height:68px;background:linear-gradient(0deg,#000,transparent),linear-gradient(90deg,#fff,#0000ff)}
.svmark{position:absolute;left:27px;top:37px;width:9px;height:9px;border-radius:50%;border:1px solid #c8d0f0}
.huemark{position:absolute;left:60px;top:118px;width:9px;height:12px;background:#1a22d0;border:2px solid #fff}
.hsv{position:absolute;right:5px;bottom:0;display:flex;align-items:center;font-size:11px;letter-spacing:-.4px;color:#c0c0c0}
.hsv .hk{width:9px;height:9px;background:#bbb;color:#333;font-size:8px;line-height:9px;text-align:center;font-weight:700;margin-left:5px;letter-spacing:0}
.hsv .n1{margin-left:2px}
.hsv .n2{margin-left:6px}
.hsv .ico{margin:0 0 3px 12px}
.sliders{height:94px;flex:none;margin-left:1px;background:#4a4a4a;display:flex;border-bottom:1px solid #333;padding:2px 0 0 2px}
.sidetabs{width:17px;display:flex;flex-direction:column;flex:none;margin-top:8px}
.sidetabs span{writing-mode:vertical-rl;transform:rotate(180deg);font-size:11px;height:28px;text-align:center;color:#888;border:1px solid #444;line-height:15px;background:#484848}
.sidetabs .on{color:#ccc;background:#4e4e4e}
.sl-list{flex:1;display:flex;flex-direction:column;border:1px solid #3a3a3a;padding-top:16px;margin-right:1px}
.sl{height:25px;display:flex;align-items:flex-start;font-size:12px;color:#c8c8c8}
.sl b{font-weight:400;width:18px;padding-left:3px;flex:none;font-size:12px;line-height:12px;margin-top:-1px}
.bar{width:219px;height:9px;position:relative;border:1px solid #555;flex:none}
.sl>span{width:25px;text-align:right;flex:none;line-height:12px;margin-top:-2px}
.sl .ico{margin:-4px 0 0 12px}
.br{background:linear-gradient(90deg,#00335f,#f23a58)}
.bv{background:linear-gradient(90deg,#330060,#34e460)}
.bb{background:linear-gradient(90deg,#333100,#3030f8)}
.ct{position:absolute;top:10px;width:9px;height:5px;border-left:1px solid #999;border-top:1px solid #999;transform:rotate(45deg) scale(.7)}
.c1{left:38px}.c2{left:37px}.c3{left:76px}
.hint-tabs{display:flex;height:2px;margin:-3px 0 1px 3px;position:relative;gap:3px;flex:none}
.hint-tabs span{width:96px;background:#555}
.hint-tabs .on{background:#8498c4}
.favrow{height:26px;flex:none;margin-left:1px;background:#4a4a4a;display:flex;align-items:center;gap:3px}
.fav{width:267px;height:20px;justify-content:center;background:#5c5c5c;border-color:#666;font-size:11.500px;padding-right:14px}
.favrow .i16{margin-left:2px}
.swatches{height:97px;flex:none;margin-left:1px;display:flex;background:#3d3d3d}
.swgrid{flex:1;display:flex;flex-direction:column;padding-left:2px}
.cell{height:20px;border-bottom:1px solid #8a8a8a;display:flex;flex:none}
.cell.last{border-bottom:none;height:17px}
.cs{width:20px;height:100%;display:block;flex:none}
.cs+.cs{margin-left:126px}
.c11{background:#5c0008}.c12{background:#fde7d6}.c13{background:#c8c4f0}.c14{background:#d8c4c4}.c15{background:#d3d7e5}
.c21{background:#c8c0dc}.c22{background:#a87c68}
.chk2{background:repeating-conic-gradient(#7a7a7a 0 25%,#fff 0 50%) 0 0/12px 12px}
.sbar{width:13px;flex:none;display:flex;flex-direction:column;background:#3d3d3d}
.sb-cap{height:13px;background:#4e4e4e;display:flex;align-items:center;justify-content:center;transform:scaleY(-1);flex:none}
.sb-cap.down{transform:none}
.sb-t{flex:1;position:relative}
.sb-t::before{content:"";position:absolute;left:1px;right:1px;top:0;height:11px;border-radius:6px;background:#555}
.tall .sb-t::before{height:42px}
.swfoot{height:20px;flex:none;margin-left:1px;background:#4a4a4a;display:flex;align-items:center;padding:0 3px;gap:4px}
.fg{flex:1}
.dot{width:7px;height:7px;flex:none}
.red{background:#a81414;margin-right:21px}
.green{background:#14a014;margin-right:21px}
.blue{background:#1414b8}
.grouprow{height:31px;flex:none;margin-left:1px;background:#4c4c4c;padding:3px 0 1px 2px}
.grp-on{width:148px;height:100%;background:#5e6b88;border:1px solid #262626;border-radius:3px;display:flex;align-items:center;gap:2px;padding-left:2px;font-size:10px;color:#d5d9e4}
.subtools{height:80px;flex:none;margin-left:1px;display:flex;background:#3d3d3d}
.stgrid{flex:1;display:grid;grid-template-columns:147px 1fr;grid-auto-rows:36px}
.st{position:relative;border-bottom:1px solid #252525;border-right:1px solid #252525;display:flex;align-items:flex-start;padding:6px 4px;background:#404040}
.st.on{background:#5e6b88}
.st span{position:absolute;right:3px;bottom:0;font-size:10.400px;color:#c8c8c8;letter-spacing:-.2px}
.st.on span{background:#525f7a;padding:0 2px;right:2px;color:#dde}
.stfoot{height:20px;flex:none;margin:5px 0 0 1px;background:#4a4a4a;display:flex;align-items:center;padding-right:3px;gap:5px}
.banner{height:38px;flex:none;margin:5px 0 0 2px;position:relative;background:linear-gradient(90deg,#c8c8c8,#e8e8e8 12%,#fff 30%,#fff 38%,#b0b0b0 62%,#cfcfcf 100%);overflow:hidden}
.bn-name{position:absolute;left:0;top:1px;background:#929292;color:#dcdcdc;font-size:11px;line-height:14px;white-space:pre;width:118px}
.bn-art{position:absolute;right:6px;top:2px;width:90px;height:36px;fill:none;stroke:#9a9a9a;stroke-width:.6}
.bn-cap{position:absolute;left:0;right:0;bottom:0;text-align:center;color:#111;font-size:10.300px;line-height:14px}
.props{flex:1;background:#3d3d3d;margin-left:1px;padding:5px 17px 0 12px;position:relative;min-height:0}
.pc{height:20px;width:275px;margin-left:5px;justify-content:center;background:#555;border-color:#5c5c5c;font-size:10px;color:#c6c6c6;padding-right:8px}
.psep{height:1px;background:#666;margin:5px 0 5px -1px;width:281px}
.s2{margin:5px 0 5px -1px}
.s3{margin:5px 0 4px -1px}
.ck{display:flex;align-items:center;gap:5px;height:20px;font-size:10px;margin:5px 0 0 5px;color:#c8c8c8}
.box{width:14px;height:14px;background:#565656;border:1px solid #666;border-radius:2px;display:flex;align-items:center;justify-content:center;flex:none}
.tree{margin-top:0;position:relative}
.minus{position:absolute;left:-7px;top:3px;width:11px;height:11px;background:#5a5a5a;border:1px solid #444}
.minus::after{content:"";position:absolute;left:2px;right:2px;top:4px;height:1px;background:#ddd}
.pbtn{height:20px;width:275px;margin:4px 0 0 5px;background:#555;border:1px solid #5c5c5c;display:flex;align-items:center;justify-content:center;font-size:9.900px;color:#c8c8c8;position:relative;padding-right:6px}
.elbow{position:absolute;left:-8px;top:-5px;width:8px;height:14px;border-left:1px solid #111;border-bottom:1px solid #111}
.gridlabel{font-size:9.700px;height:14px;margin:0 0 0 5px;line-height:14px;color:#c8c8c8}
.seg{display:flex;gap:2px;margin-left:21px;height:25px;position:relative;margin-top:-1px}
.sg{flex:none;width:85px;height:25px;background:#555;display:flex;align-items:center;justify-content:center;border-radius:2px}
.sg.on{background:#5f7096}
.m2{left:-21px;top:2px}
.gsize{position:relative;height:25px;margin-left:5px}
.e2{left:-8px;top:-8px;height:18px}
.gtext{position:absolute;left:1px;top:4px;font-size:9.800px;color:#c8c8c8}
.gslider{position:absolute;left:21px;top:17px;width:181px;height:7px;border:1px solid #555;border-top-color:#333;background:#3a3a3a}
.gslider span{display:block;width:115px;height:100%;background:#555;border:1px solid #6a6a6a}
.gval{position:absolute;left:221px;top:9px;font-size:11.500px;color:#c8c8c8}
.gsize .spin{position:absolute;left:246px;top:9px}
.pfoot{height:19px;flex:none;margin-left:1px;background:#4a4a4a;display:flex;align-items:center;padding-right:3px;gap:7px}
.bottomline{height:2px;flex:none;background:#cdcdcd}
```

FILE: canvas.js
```js
(function () {
  var NS = 'http://www.w3.org/2000/svg';
  function el(parent, name, attrs) {
    var e = document.createElementNS(NS, name);
    for (var k in attrs) e.setAttribute(k, attrs[k]);
    parent.appendChild(e);
    return e;
  }
  function ln(parent, x1, y1, x2, y2, stroke, w, dash, off) {
    var a = { x1: x1, y1: y1, x2: x2, y2: y2, stroke: stroke, 'stroke-width': w || 1 };
    if (dash) a['stroke-dasharray'] = dash;
    if (off) a['stroke-dashoffset'] = off;
    return el(parent, 'line', a);
  }
  var lx = 485, rx = 1386, hy = 724.5, top = 95, bot = 1048, left = 288, right = 1585;
  var brown = 'rgba(205,160,155,.42)', dark = 'rgba(38,30,30,.6)';
  var thick = document.getElementById('thick');
  var thin = document.getElementById('thin');
  var over = document.getElementById('over');
  var grid = document.getElementById('grid');
  var band = document.getElementById('band');
  var handles = document.getElementById('handles');

  /* solid band and the dense zone beside it */
  el(band, 'rect', { x: 1327, y: 95, width: 23, height: 600, fill: '#6e5553' });
  el(band, 'rect', { x: 1327, y: 695, width: 23, height: 353, fill: '#3c3030' });
  el(band, 'path', { d: 'M1350 95H1365Q1372 350 1386 724.500Q1378 870 1375 1048H1350Z', fill: '#7a5c5a' });
  var x, i = 0;
  for (x = 1328; x < 1350; x += 3.4) {
    ln(band, x, 695, x, bot, 'rgba(150,112,108,.6)', 1, '6 3', i * 3);
    i++;
  }
  for (x = 1329; x < 1350; x += 4) {
    ln(band, x, top, x, 695, 'rgba(46,38,38,.75)', 1, '9 8', i * 5);
    i++;
  }
  /* fan of dark spokes inside the band near the right vanishing point */
  var m;
  for (m = 6; m < 40; m *= 1.32) {
    ln(band, rx - 1, hy, rx - 1 - 143 / m, hy + 143, dark, 0.8);
    ln(band, rx - 1, hy, rx - 1 - 95 / m, hy - 95, dark, 0.8);
  }
  el(band, 'path', { d: 'M1372 716 1386 724.500 1372 733Z', fill: '#2c2844' });

  /* vanishing lines [start x, slope] of the purple guide set */
  var guides = [[lx, -0.403], [lx, 0.2024], [rx, 0.5], [rx, -0.251]];
  guides.forEach(function (g) {
    var ya = hy + (left - g[0]) * g[1], yb = hy + (right - g[0]) * g[1];
    var isLeft = g[0] === lx;
    var x0 = isLeft ? g[0] : left, y0 = isLeft ? hy : ya;
    var x1 = isLeft ? right : g[0], y1 = isLeft ? yb : hy;
    ln(thick, x0, y0, x1, y1, '#352a4c', 2.2);
    ln(over, x0, y0, x1, y1, '#352a4c', 1.5);
    ln(thin, x0, y0, x1, y1, 'rgba(160,130,185,.9)', 0.9);
  });
  ln(thick, left, hy, right, hy, '#2b2848', 5);
  ln(over, left, hy, right, hy, '#2b2848', 4);
  ln(thin, left, hy, right, hy, '#8c84b4', 1);

  /* receding verticals of the grid */
  var n, d;
  for (n = 0; n < 24; n++) {
    d = 1 / (0.001506 + 0.000877 * n);
    ln(grid, rx - d, top, rx - d, bot, brown, 1);
  }
  /* spokes from the right vanishing point */
  for (n = 0; n < 18; n++) {
    m = 0.427 + 0.53 * n;
    ln(grid, rx, hy, rx - (hy - top) / m, top, brown, 1);
    m = 0.0947 + 0.53 * n;
    ln(grid, rx, hy, rx - (bot - hy) / m, bot, brown, 1);
  }
  /* centre vertical */
  ln(grid, 984, top, 984, bot, 'rgba(120,100,170,.75)', 1);

  /* handles */
  function h(id, cx, cy, size, op) {
    var u = el(handles, 'use', { href: '#' + id, x: cx - size / 2, y: cy - size / 2, width: size, height: size });
    if (op) u.setAttribute('opacity', op);
  }
  [[737, 624], [829, 585], [1101, 582], [1190, 626], [734, 775], [832, 796], [1097, 797], [1193, 773], [934, 724.5], [1034, 724.5]]
    .forEach(function (p) { h('h-handle', p[0], p[1], 10); });
  [[783, 604], [1145, 603], [783, 786], [1145, 786]].forEach(function (p) { h('h-ring', p[0], p[1], 12); });
  [[798, 620], [1161, 619], [798, 800], [1160, 800], [907, 637]].forEach(function (p) { h('h-diam', p[0], p[1], 12); });
  h('h-diam', 878, 607, 11, '.55');
  h('h-diam', 999, 639, 11, '.55');
  h('h-vp', lx, hy, 12);
  h('h-vp', rx, hy, 12);
  h('h-vp', 965, 984, 12);
  h('h-red', 984, 724.5, 12);

  /* move cursor */
  var mv = el(handles, 'g', { fill: 'none', stroke: '#4f90aa', 'stroke-width': 1.3 });
  el(mv, 'circle', { cx: 891, cy: 621, r: 9, fill: '#f1f6f9', stroke: 'none' });
  el(mv, 'path', { d: 'M891 614V628M884 621H898M889 616l2-2 2 2M889 626l2 2 2-2M886 619l-2 2 2 2M896 619l2 2-2 2' });
})();
```
